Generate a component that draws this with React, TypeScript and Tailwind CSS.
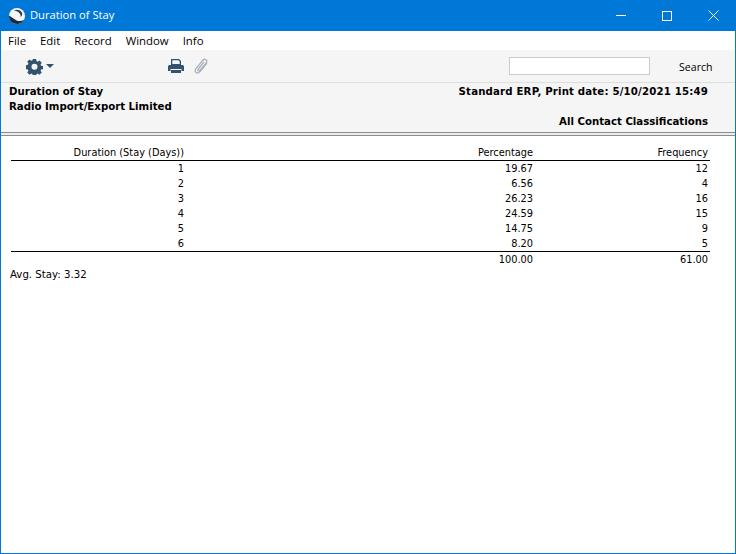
const rows = [
  ['1', '19.67', '12'],
  ['2', '6.56', '4'],
  ['3', '26.23', '16'],
  ['4', '24.59', '15'],
  ['5', '14.75', '9'],
  ['6', '8.20', '5'],
];

const gridCols = 'grid grid-cols-[173px_349px_175px] text-right';

function Logo() {
  return (
    <svg width="18" height="18" viewBox="0 0 18 18">
      <circle cx="9" cy="9" r="8" fill="#f4f6f8" />
      <path d="M1 8.500c-.3 4.500 3 8.500 8 8.500 3 0 5.500-1.500 7-4-3 1.500-6.500 1.500-9-.5C5 11 3 10 1 8.500z" fill="#1c2b3c" />
      <path d="M6 3.500c2.500-1.500 6-.5 7.500 1.500 1.200 1.700.8 4-1 5 .6-2-.6-3.800-2.300-5C9 4.200 7.500 3.600 6 3.500z" fill="#2a3b4e" />
    </svg>
  );
}

function Gear() {
  return (
    <svg width="17" height="17" viewBox="0 0 18 18">
      <path
        fillRule="evenodd"
        fill="#32526f"
        d="M7.300 1h3.400l.4 2.300 1.300.6 1.900-1.300 2.400 2.400-1.300 1.900.6 1.300 2 .4v3.200l-2 .4-.6 1.300 1.300 1.900-2.400 2.400-1.900-1.300-1.300.6-.4 1.900H7.300l-.4-1.900-1.300-.6-1.900 1.300-2.400-2.400 1.300-1.900-.6-1.300-2-.4V7.600l2-.4.6-1.300-1.300-1.900 2.400-2.400 1.900 1.300 1.300-.6zM9 6a3.200 3.200 0 1 0 0 6.400A3.200 3.200 0 0 0 9 6z"
      />
    </svg>
  );
}

function Printer() {
  return (
    <svg width="16" height="15" viewBox="0 0 16 15">
      <path fill="#32526f" d="M3 0h8l2 2v4H3zM4.300 1.200v3.700h7.400V2.500L10.500 1.200z" fillRule="evenodd" />
      <path fill="#32526f" d="M1.500 6h13A1.500 1.500 0 0 1 16 7.500V12h-2.500v-2h-11v2H0V7.500A1.500 1.500 0 0 1 1.500 6z" />
      <path fill="#32526f" d="M3 11h10v3H3z" />
    </svg>
  );
}

function Clip() {
  return (
    <svg width="14" height="16" viewBox="0 0 15 17" fill="none" stroke="#a9b2ba" strokeWidth="1.400" strokeLinecap="round">
      <path d="M13.500 6 6.500 14.500c-1.400 1.600-3.200 1.900-4.400.9-1.200-1-1.100-2.800.2-4.300l7-8.500c1.100-1.300 2.600-1.700 3.700-.8 1.100.9 1 2.400-.1 3.700L6.500 13c-.7.800-1.500.9-2 .5-.5-.4-.4-1.300.3-2.100l5.600-6.800" />
    </svg>
  );
}

export default function App() {
  return (
    <div className="w-[736px] h-[554px] bg-white border-x border-b border-[#0078d7] flex flex-col overflow-hidden font-['DejaVu_Sans',sans-serif] text-[9.8px] text-black">
      {/* title bar */}
      <div className="h-[31px] shrink-0 bg-[#0078d7] flex items-center text-white -mx-px">
        <div className="ml-[8px] w-[18px] flex"><Logo /></div>
        <span className="ml-[4px] font-['Open_Sans',sans-serif] text-[11.2px]">Duration of Stay</span>
        <div className="ml-auto flex items-center">
          <div className="w-[46px] flex justify-center">
            <div className="w-[10px] h-px bg-white" />
          </div>
          <div className="w-[46px] flex justify-center">
            <div className="w-[10px] h-[10px] border border-white" />
          </div>
          <div className="w-[46px] flex justify-center">
            <svg width="11" height="11" viewBox="0 0 11 11" stroke="#ffffff" fill="none">
              <path d="M.5.500l10 10M10.500.500l-10 10" />
            </svg>
          </div>
        </div>
      </div>

      {/* menu */}
      <div className="h-[19px] shrink-0 bg-white flex items-center pl-[7px] pt-px gap-[14px] font-['Open_Sans',sans-serif] text-[11.4px]">
        <span>File</span>
        <span>Edit</span>
        <span>Record</span>
        <span>Window</span>
        <span>Info</span>
      </div>

      {/* toolbar */}
      <div className="h-[33px] shrink-0 bg-[#f5f5f5] border-b border-[#dfdfdf] flex items-center">
        <div className="ml-[25px] flex items-center gap-[3px]">
          <Gear />
          <div className="w-0 h-0 border-x-[4px] border-x-transparent border-t-[4px] border-t-[#32526f]" />
        </div>
        <div className="ml-[114px] flex"><Printer /></div>
        <div className="ml-[10px] flex"><Clip /></div>
        <input className="ml-[301px] w-[141px] h-[18px] bg-white border border-[#cccccc] outline-none" />
        <span className="ml-[29px] pt-[3px] font-['Open_Sans',sans-serif] text-[10.6px]">Search</span>
      </div>

      {/* report header */}
      <div className="h-[49px] shrink-0 bg-[#f5f5f5] flex justify-between pl-[8px] pr-[27px] pt-px font-bold text-[10.2px] leading-[15px]">
        <div>
          <div>Duration of Stay</div>
          <div>Radio Import/Export Limited</div>
        </div>
        <div className="text-right">
          <div className="tracking-[0.17px]">Standard ERP, Print date: 5/10/2021 15:49</div>
          <div className="mt-[15px]">All Contact Classifications</div>
        </div>
      </div>
      <div className="h-[4px] shrink-0 border-y border-[#8c8c8c] bg-[#ececec]" />

      {/* table */}
      <div className="pl-[10px] pt-[9px] leading-[15px]">
        <div className="w-[699px]">
          <div className={`${gridCols} h-[16px] border-b border-black`}>
            <div>Duration (Stay (Days))</div>
            <div>Percentage</div>
            <div>Frequency</div>
          </div>
          <div className="border-b border-black">
            {rows.map((row) => (
              <div key={row[0]} className={`${gridCols} h-[15px]`}>
                <div>{row[0]}</div>
                <div>{row[1]}</div>
                <div>{row[2]}</div>
              </div>
            ))}
          </div>
          <div className={gridCols}>
            <div />
            <div>100.00</div>
            <div>61.00</div>
          </div>
        </div>
        <div className="-ml-[1px] text-[10.2px]">Avg. Stay: 3.32</div>
      </div>
    </div>
  );
}
